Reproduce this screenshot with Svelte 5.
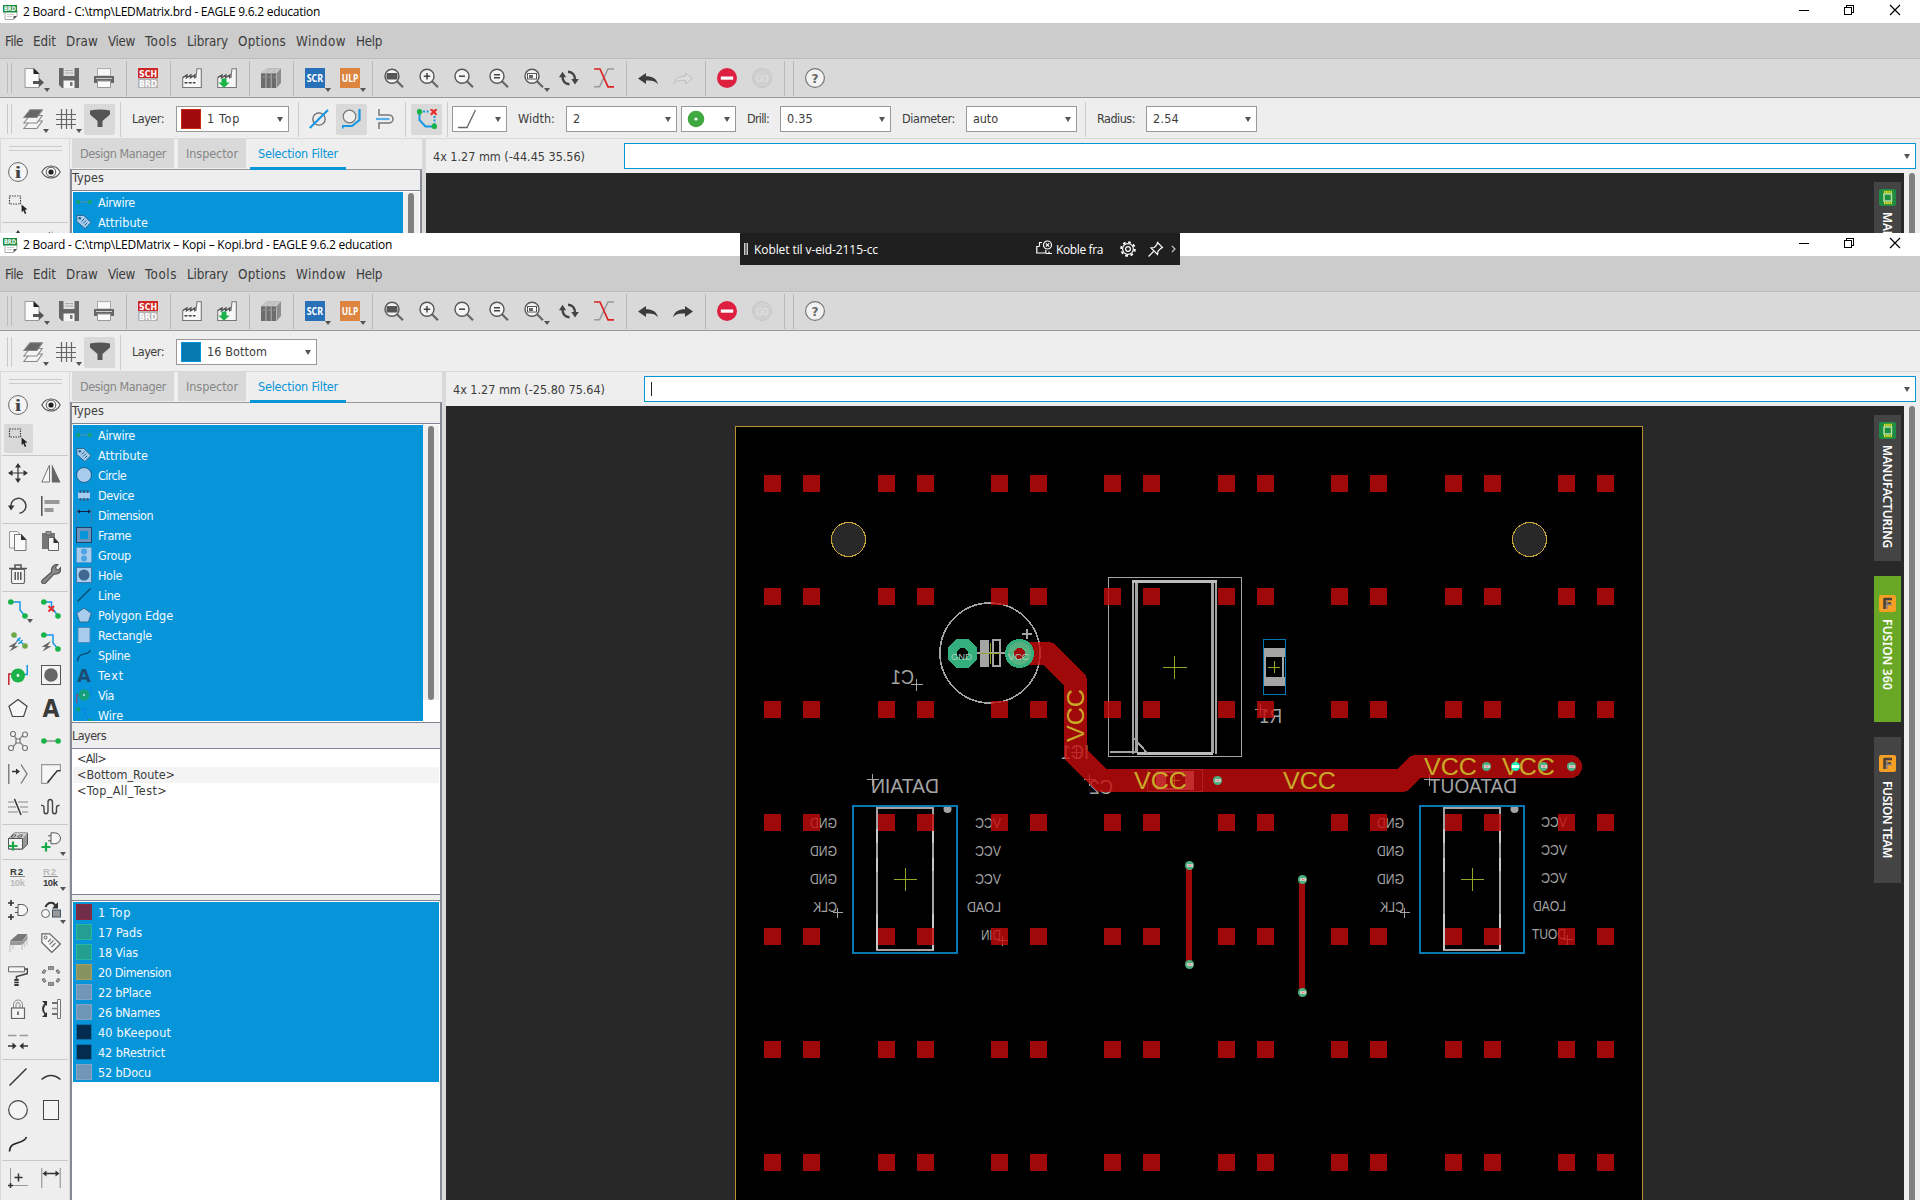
<script>
  // Letter-spaces a label so that it occupies exactly `w` pixels.
  function fit(node, w) {
    const n = node.textContent.length;
    node.style.letterSpacing = '0px';
    const natural = node.getBoundingClientRect().width;
    node.style.letterSpacing = (w - natural) / n + 'px';
    node.style.width = w + 'px';
  }
  function fitTall(node, h) {
    const n = node.textContent.length;
    const natural = node.getBoundingClientRect().height;
    node.style.letterSpacing = (h - natural) / n + 'px';
  }

  const menus = [['File', 18], ['Edit', 23], ['Draw', 32], ['View', 27], ['Tools', 32], ['Library', 41], ['Options', 48], ['Window', 50], ['Help', 26]];

  const lens = '<path d="M13 13.2l6 6" stroke="#666" stroke-width="2.2"/><circle cx="8" cy="8.2" r="7" fill="#f4f4f4" stroke="#555" stroke-width="1.4"/>';
  const factory = '<path d="M.7 19.500V9.500l4-2.500v2.500l4-2.500v2.500l4-2.500v2.500H14L15 .7h4.300v18.800z" fill="#f7f7f7" stroke="#777" stroke-width="1.1"/><path d="M1 9.500l4-2.500-.6 3L9 7l-.6 3L13 7l-.4 3.500" fill="none" stroke="#555" stroke-width="1.200"/>';
  const gate = (x, y) => `<path d="M${x} ${y}h3.500c4 0 6 3 6 5.500s-2 5.500-6 5.500h-3.500z" fill="#f6f6f6" stroke="#555"/><path d="M${x - 3} ${y + 3}h3M${x - 3} ${y + 8}h3M${x + 9.500} ${y + 5.500}h3" stroke="#555"/>`;
  const bolt = '<path d="M10 9L.5 14.800l4.200.2L1.500 19.500l9-5.300-4-.2z" fill="#666"/>';

  const icons = {
    new: '<path d="M1 .5h9l5 5V19.500H1z" fill="#fafafa" stroke="#999"/><path d="M9.500 0v6h6z" fill="#222"/><path d="M9 13h6v-3l5 4.500-5 4.500v-3H9z" fill="#555"/>',
    save: '<path d="M0 0h20v20H3l-3-3z" fill="#666"/><path d="M4.500 0h11v8h-11z" fill="#ddd"/><path d="M4.500 12.500h11V20h-11z" fill="#f6f6f6"/><path d="M11 14h2.500v4H11z" fill="#777"/><path d="M6 2.500h8M6 5h8" stroke="#aaa"/>',
    print: '<path d="M3.500.6h13V8h-13z" fill="#f8f8f8" stroke="#aaa"/><path d="M0 8h20v7H0z" fill="#666"/><path d="M2 10.500h16" stroke="#ccc"/><path d="M3.500 13h13v6.500h-13z" fill="#fafafa" stroke="#999"/>',
    sch: '<path d="M0 0h20v10H0z" fill="#cf2525"/><path d="M0 10h20v10H0z" fill="#b4b4b4"/><g font-family="DejaVu Sans Condensed, sans-serif" font-weight="700" font-size="9" fill="#fff"><text x="1" y="8.500" textLength="18" lengthAdjust="spacingAndGlyphs">SCH</text><text x="1" y="18.500" textLength="18" lengthAdjust="spacingAndGlyphs">BRD</text></g>',
    cam: factory + '<path d="M2.500 14.800h11" stroke="#444" stroke-width="1.600" stroke-dasharray="3 1.200"/>',
    cam2: factory + '<path d="M4.500 10.500h5v4h3.200L7 19.800 1.300 14.500h3.200z" fill="#19b347"/>',
    lib: '<path d="M0 5.500L5.500.5H20v14.500l-4.500 5H0z" fill="#8c8c8c"/><path d="M0 5.500L5.500.5H20L15.500 5.500z" fill="#c8c8c8"/><path d="M0 5.500h15.500V20H0z" fill="#6c6c6c"/><path d="M5 5.500V20M10.200 5.500V20M15.500 5.500V20M5 5.500L10 .5M10 5.500L15 .5" stroke="#b4b4b4"/><path d="M1.500 9h2.500M6.700 9h2.500M12 9h2.500" stroke="#999"/>',
    scr: '<path d="M0 0h20v20H0z" fill="#2870b8"/><text x="1.700" y="13.800" font-family="Noto Sans, sans-serif" font-weight="700" font-size="10" fill="#fff" textLength="16.500" lengthAdjust="spacingAndGlyphs">SCR</text>',
    ulp: '<path d="M0 0h20v20H0z" fill="#dc8440"/><text x="1.700" y="13.800" font-family="Noto Sans, sans-serif" font-weight="700" font-size="10" fill="#fff" textLength="16.500" lengthAdjust="spacingAndGlyphs">ULP</text>',
    zfit: lens + '<rect x="2.500" y="5" width="11" height="6.500" rx="1" fill="#555"/>',
    zin: lens + '<path d="M4.800 8.200h6.400M8 5v6.400" stroke="#444" stroke-width="1.500"/>',
    zout: lens + '<path d="M5 8.200h6" stroke="#444" stroke-width="1.500"/>',
    zeq: lens + '<path d="M5 6.700h6M5 9.700h6" stroke="#444" stroke-width="1.400"/>',
    zsel: lens + '<rect x="3.500" y="5.500" width="9" height="5.500" fill="#fff" stroke="#555"/><path d="M5 7h4v3H5z" fill="#666"/>',
    refresh: '<path d="M3.500 8.500C3.500 13 6 16.300 10.500 16.300M16 11.500C16 7 13.500 3.800 9 3.800" fill="none" stroke="#444" stroke-width="2.400"/><path d="M0 9.200L3.500 3.700 7.200 9.200zM12.300 11h7.500L16 16.500z" fill="#444"/>',
    ripup: '<path d="M0 18.800h5.500L14 1h6" fill="none" stroke="#999" stroke-width="1.600"/><path d="M0 1h6l8 17.800h6" fill="none" stroke="#d22" stroke-width="1.700"/>',
    undo: '<path d="M0 10.500L8 5v3.200c6 0 10.500 2 12 8-3-3.700-6.500-4-12-3.700V16z" fill="#3c3c3c"/>',
    redo: '<path d="M20 10.500L12 5v3.200c-6 0-10.500 2-12 8 3-3.700 6.500-4 12-3.700V16z" fill="#3c3c3c"/>',
    redoOff: '<path d="M19.500 10.500L12.500 5v3.200c-6 0-10.500 2-12 7.500 3-3.200 6.500-3.500 12-3.200V16z" fill="#ddd" stroke="#bebebe"/>',
    stop: '<circle cx="10" cy="10" r="10" fill="#dd2040"/><path d="M3.800 8.500h12.400v3.200H3.800z" fill="#fff"/>',
    go: '<circle cx="10" cy="10" r="9.500" fill="#d0d0d0" stroke="#c6c6c6"/><text x="4" y="13.700" font-family="Noto Sans, sans-serif" font-size="9.500" fill="#e6e6e6" textLength="12.500" lengthAdjust="spacingAndGlyphs">GO</text>',
    help: '<circle cx="10" cy="10" r="9.400" fill="#f2f2f2" stroke="#777" stroke-width="1.200"/><text x="6.400" y="15" font-family="DejaVu Sans, sans-serif" font-weight="700" font-size="13" fill="#666" textLength="7" lengthAdjust="spacingAndGlyphs">?</text>',
    layers: '<g stroke="#888" stroke-width="1.100"><path d="M.8 19.500l6-7.500h12.500l-5.500 7.500z" fill="#f4f4f4"/><path d="M.8 14l6-7.500h12.500l-5.500 7.500z" fill="#f4f4f4"/><path d="M.8 8.500L7 .8h12.500l-5.500 7.700z" fill="#666"/></g>',
    grid: '<path d="M5.500 0v20M10.500 0v20M15.500 0v20M0 5.500h20M0 10.500h20M0 15.500h20" stroke="#666" stroke-width="1.200"/>',
    filter: '<path d="M0 1.500Q10-.5 20 1.500v4L12.500 12v6h-5v-6L0 5.500z" fill="#555"/>',
    obs0: '<circle cx="10" cy="10" r="6.200" fill="none" stroke="#666" stroke-width="1.300"/><path d="M.8 19L19 1" stroke="#1898e4" stroke-width="2.200"/>',
    obs1: '<circle cx="7.500" cy="7.500" r="6.300" fill="#f0f0f0" stroke="#777" stroke-width="1.200"/><path d="M.5 19.500V17h9.500l7.500-6V0" fill="none" stroke="#1898e4" stroke-width="2.200"/>',
    obs2: '<path d="M4 0v6h9.500c2.500 0 4.500 1.800 4.500 4s-2 4-4.500 4H4v6" fill="none" stroke="#777" stroke-width="1.500"/><path d="M1 10h13.500" stroke="#58b0e8" stroke-width="2.200"/>',
    loop: '<path d="M2.500 3v8l6 6.500H15" fill="none" stroke="#1898e4" stroke-width="2"/><path d="M6 2.500h7M17.500 7v8" stroke="#1898e4" stroke-width="2" stroke-dasharray="2 1.500"/><circle cx="2.500" cy="2.800" r="2.800" fill="#19b347"/><circle cx="17.300" cy="17.300" r="2.800" fill="#19b347"/><path d="M13.800 0l5.800 5.800M19.600 0l-5.800 5.800" stroke="#e82c2c" stroke-width="2.200"/>',
    bend: '<path d="M1 18.500h9L18.500 1" fill="none" stroke="#666" stroke-width="1.300"/>',
    via: '<circle cx="10" cy="10" r="8.300" fill="#40a840"/><circle cx="10" cy="10" r="1.600" fill="#fff"/>',
    info: '<circle cx="10" cy="10" r="9.400" fill="#f4f4f4" stroke="#666"/><text x="6.800" y="15.500" font-family="Liberation Serif, serif" font-weight="700" font-size="16" fill="#444" textLength="6.500" lengthAdjust="spacingAndGlyphs">i</text>',
    eye: '<path d="M.8 10C5 2 15 2 19.200 10 15 18 5 18 .8 10z" fill="#f6f6f6" stroke="#555" stroke-width="1.100"/><circle cx="10" cy="10" r="4.800" fill="none" stroke="#555"/><circle cx="10" cy="10" r="2.600" fill="#222"/>',
    select: '<rect x="1.500" y="1" width="11" height="8" fill="none" stroke="#444" stroke-width="1.200" stroke-dasharray="1.500 1"/><path d="M13.500 9.500l6 5-2.700.2 1.500 3.500-1.500.7-1.400-3.400-1.700 1.800z" fill="#222"/>',
    move: '<path d="M10 2v16M2 10h16" stroke="#333" stroke-width="1.200"/><path d="M10 0l3 4.500H7zM10 20l-3-4.500h6zM0 10l4.500-3v6zM20 10l-4.500 3V7z" fill="#333"/>',
    mirror: '<path d="M.8 19L8.500 2v17z" fill="#f6f6f6" stroke="#777"/><path d="M10.800 1L19.500 19.500h-8.700z" fill="#666"/>',
    rotate: '<path d="M3 11A7.500 7.500 0 1 1 11.500 17.300" fill="none" stroke="#444" stroke-width="1.500"/><path d="M0 9.500h6.500L3 14.500z" fill="#333"/>',
    align: '<path d="M.8 0v20" stroke="#444" stroke-width="1.400"/><path d="M3.500 4h15v4h-15zM3.500 12h9v4h-9z" fill="#999"/>',
    copy: '<path d="M1.500.5h8l4 4.500v12h-12z" fill="#f8f8f8" stroke="#999"/><path d="M6.500 3.500h7l4.500 5v11H6.500z" fill="#fafafa" stroke="#777"/><path d="M13 3v6h5.500z" fill="#333"/>',
    paste: '<path d="M1 2h13v16H1z" fill="#777"/><path d="M5 .3h5V4H5z" fill="#999" stroke="#555" stroke-width=".8"/><path d="M7.500 6.500h5.500l4.500 5v8h-10z" fill="#f6f6f6" stroke="#666"/><path d="M12.500 6v6H18z" fill="#333"/>',
    trash: '<path d="M3.500 5.500h13v12.200q0 1.800-1.800 1.800H5.300q-1.800 0-1.800-1.800z" fill="#f4f4f4" stroke="#666" stroke-width="1.200"/><path d="M1 4.500h18M7 4V1h6v3M7.200 8v8M10 8v8M12.800 8v8" fill="none" stroke="#555" stroke-width="1.500"/>',
    wrench: '<path d="M1 16.500L10.500 8q-.7-5 3.500-7.200 1.500-.7 3-.5l-2.600 3 1 2.200 2.400.2 2-2.400q.6 4.500-2.800 6.300-1.800 1-4 .4L4 19.500q-1.500.8-2.700-.4T1 16.500z" fill="#888" stroke="#555" stroke-width="1.100"/>',
    route: '<path d="M3 3h9v8l5 6" fill="none" stroke="#1898e4" stroke-width="1.500"/><circle cx="2.800" cy="3" r="2.800" fill="#19b347"/><circle cx="17" cy="17" r="2.800" fill="#19b347"/>',
    rip: '<path d="M3 3h7.500v5l6.500 9" fill="none" stroke="#1898e4" stroke-width="1.500"/><circle cx="2.800" cy="3" r="2.800" fill="#19b347"/><circle cx="17" cy="17" r="2.800" fill="#19b347"/><path d="M7.500 7l5.500 5.500M13 7l-5.500 5.500" stroke="#e82c2c" stroke-width="2"/>',
    fan: '<path d="M6 3l11 11" stroke="#1898e4" stroke-width="1.500" stroke-dasharray="3 2"/><path d="M8.500 9.500l4-4M10.500 12l4-4" stroke="#1898e4" stroke-width="1.400"/><circle cx="6" cy="3" r="2.800" fill="#70a848"/><circle cx="17" cy="14" r="2.800" fill="#70a848"/>' + bolt,
    auto: '<path d="M3 3h9v8l5 6" fill="none" stroke="#1898e4" stroke-width="1.500"/><circle cx="2.800" cy="3" r="2.800" fill="#19b347"/><circle cx="17" cy="17" r="2.800" fill="#19b347"/>' + bolt,
    viaTool: '<path d="M.8 20V9H5" fill="none" stroke="#c03038" stroke-width="1.600"/><path d="M19.300 0v9.500H15" fill="none" stroke="#1898e4" stroke-width="1.600"/><circle cx="10" cy="10.500" r="7" fill="#19b347"/><circle cx="10" cy="10.500" r="1.400" fill="#fff"/>',
    hole: '<rect x=".5" y=".5" width="19" height="19" fill="#f4f4f4" stroke="#555"/><circle cx="10" cy="10" r="6.800" fill="#666"/>',
    poly: '<path d="M10 1.500l9 6.800-3.400 10.200H4.400L1 8.300z" fill="#f6f6f6" stroke="#444" stroke-width="1.200"/>',
    text: '<text x="1.500" y="18.800" font-family="DejaVu Sans, sans-serif" font-weight="700" font-size="24.500" fill="#3a3a3a" textLength="17" lengthAdjust="spacingAndGlyphs">A</text>',
    rats: '<path d="M5 3l5 7-6 7M16 3l-6 7 7 6" fill="none" stroke="#888" stroke-width="1.300"/><g fill="#f6f6f6" stroke="#777" stroke-width="1.200"><circle cx="5" cy="3" r="2.500"/><circle cx="17" cy="3.500" r="2.500"/><circle cx="3" cy="17" r="2.500"/><circle cx="17" cy="17" r="2.500"/><path d="M8 8h4v4H8z"/></g>',
    air: '<path d="M3 10h14" stroke="#888" stroke-width="1.400"/><circle cx="2.900" cy="10" r="2.800" fill="#19b347"/><circle cx="17.100" cy="10" r="2.800" fill="#19b347"/>',
    split: '<path d="M.8 0v20" stroke="#666" stroke-width="1.200"/><path d="M13 .5l6 9.500-6 9.500" fill="none" stroke="#777" stroke-width="1.300"/><path d="M4 7.500h5" stroke="#333" stroke-width="1.500"/><path d="M8 4.500l4 3-4 3z" fill="#333"/>',
    miter: '<path d="M.6.6h18.800v6.200H16L6.500 19.400H.6z" fill="#f6f6f6" stroke="#999" stroke-width="1.200"/><path d="M19.400 6.600h-3L6.500 18.500" fill="none" stroke="#333" stroke-width="1.400"/>',
    slice: '<path d="M0 5h6M10 5h10M0 10h8M12 10h8M0 15h10M14 15h6" stroke="#aaa" stroke-width="1.400"/><path d="M6.500 2L13 18" stroke="#333" stroke-width="1.500"/>',
    meander: '<path d="M0 8.500q3-.7 3 2.500v3q0 2.800 2 2.800t2-2.800V5.500q0-3 2.200-3t2.300 3V14q0 2.800 2 2.800t2-2.800v-3q0-3 3-2.500" fill="none" stroke="#444" stroke-width="1.400"/>',
    add: '<path d="M.5 6.500L6 1h13.500v11.500L14.500 17H.5z" fill="#999" stroke="#555"/><path d="M.5 6.500L6 1h13.500l-5 5.500z" fill="#ccc"/><path d="M.5 6.500h14V17H.5z" fill="#f4f4f4" stroke="#555"/><path d="M3 5l2-2h3L6.500 5zM9.500 5l2-2h3L13 5z" fill="#fff" stroke="#555"/><path d="M5 9.500v9M.5 14h9" stroke="#19a847" stroke-width="2.200"/>',
    gatePlus: gate(10, 0.8) + '<path d="M5 10.500v9M.5 15h9" stroke="#19a847" stroke-width="2.200"/>',
    r2a: '<g font-family="Liberation Sans, sans-serif" font-weight="700" font-size="9.500"><text x="2" y="8" fill="#3a3a3a" textLength="13">R2</text><text x="2" y="18.500" fill="#bbb" textLength="15">10k</text></g><path d="M2 9.500h15" stroke="#888"/>',
    r2b: '<g font-family="Liberation Sans, sans-serif" font-weight="700" font-size="9.500"><text x="2" y="8" fill="#bbb" textLength="13">R2</text><text x="2" y="18.500" fill="#3a3a3a" textLength="15">10k</text></g><path d="M2 9.500h15" stroke="#888"/>',
    gates: gate(10, 4.5) + '<path d="M3 0v6M0 3h6M3 14v6M0 17h6" stroke="#333" stroke-width="1.600"/>',
    replace: '<path d="M4.500 7Q7 1.500 12 3l3 3" fill="none" stroke="#333" stroke-width="2"/><path d="M17 2v6.500h-6z" fill="#333"/><circle cx="4.500" cy="13.500" r="4" fill="#f6f6f6" stroke="#666"/><rect x="11.500" y="10" width="8" height="7" fill="#999" stroke="#456"/>',
    smash: '<path d="M3 7L10 1h9.500L14 8.500H2z" fill="#777"/><path d="M2 8.500h12L19.500 2v4L14.500 12H2z" fill="#999"/><path d="M2 12v7M5 12v4M14 11v6M16.500 9v5M19 7v5" stroke="#ccc" stroke-width="1.400"/>',
    tag: '<path d="M.8.8h8L19.300 11l-8.500 8.500L.8 9.500z" fill="#f8f8f8" stroke="#666" stroke-width="1.200"/><circle cx="4.500" cy="4.500" r="1.500" fill="none" stroke="#555"/><path d="M7 9l3-3M8.500 11.500l4-4M10.500 14l4-4" stroke="#777" stroke-width="1.200"/>',
    paint: '<path d="M.5.8h16v5H.5z" fill="#f6f6f6" stroke="#666"/><path d="M17 3h2.500v4.500L8.500 10.500v2.500" fill="none" stroke="#444" stroke-width="1.600"/><path d="M6.300 13h4.400v7H6.300z" fill="#333"/><path d="M6 15.300h5M6 17.600h5" stroke="#eee" stroke-width=".8"/>',
    ring: '<g fill="#999" stroke="#666" stroke-width=".8"><path d="M7.500.6h5v3h-5zM7.500 16.400h5v3h-5zM1 6.500l2-3 2 1.300-2 3zM15 4.800l2-1.300 2 3-2 1.300zM1 13.500l2-1.300 2 3-2 1.300zM15 15.200l2-3 2 1.300-2 3z"/></g>',
    lock: '<path d="M5.500 9V5.500a4.500 4.500 0 0 1 9 0V9M8 9V5.700a2 2 0 0 1 4 0V9" fill="none" stroke="#888"/><rect x="3.500" y="9" width="13" height="10.500" fill="#f4f4f4" stroke="#666" stroke-width="1.200"/><path d="M10 12.500v3.500" stroke="#444" stroke-width="1.400"/>',
    pinswap: '<path d="M5 4Q-1 10 5 16" fill="none" stroke="#333" stroke-width="1.800"/><path d="M1 2h5v5zM1 18h5v-5z" fill="#333"/><path d="M16.500.5h3v19h-3z" fill="#f4f4f4" stroke="#777"/><path d="M11 4h5M11 15h5" stroke="#444" stroke-width="1.500"/><path d="M11 9.500h5" stroke="#888" stroke-width="1.500"/>',
    optimize: '<path d="M0 3.500h8.500M11.500 3.500H20" stroke="#999" stroke-width="1.500"/><path d="M0 14h5M15 14h5" stroke="#333" stroke-width="1.400"/><path d="M4.500 10.500l4 3.500-4 3.500zM15.500 10.500l-4 3.500 4 3.500z" fill="#333"/>',
    line: '<path d="M1.500 18.500l17-17" stroke="#333" stroke-width="1.400"/>',
    arc: '<path d="M.5 12.500q9.500-8 19 0" fill="none" stroke="#333" stroke-width="1.400"/>',
    circle: '<circle cx="10" cy="10" r="9.300" fill="#f4f4f4" stroke="#444" stroke-width="1.200"/>',
    rect: '<rect x="2.500" y=".5" width="15" height="19" fill="#f4f4f4" stroke="#444"/>',
    spline: '<path d="M1.500 18.500C2 7 15 12.500 18.500 4" fill="none" stroke="#222" stroke-width="1.600"/>',
    mark: '<path d="M2.500 0v20M0 17.500h20" stroke="#999"/><path d="M10.500 5.500v8M6.500 9.500h8M2.500 15v5M0 17.500h5" stroke="#333" stroke-width="1.500"/>',
    dim: '<path d="M.8 0v20M19.200 0v20" stroke="#888"/><path d="M4 5.500h12" stroke="#333" stroke-width="1.500"/><path d="M1.500 5.500l4-3v6zM18.500 5.500l-4-3v6z" fill="#333"/>'
  };

  const mini = {
    Airwire: '<path d="M3 8h10" stroke="#5a8fb0"/><circle cx="2.200" cy="8" r="2.200" fill="#14a078"/><circle cx="13.800" cy="8" r="2.200" fill="#14a078"/>',
    Attribute: '<path d="M.8 1.500h7L15 8.500 9 14.500.8 7.500z" fill="#a8ccec" stroke="#2c6894"/><circle cx="3.800" cy="4.300" r="1.300" fill="#1c5c8c"/><path d="M5.500 7.500l3-3M7 9.500l3-3M8.700 11.300l2.500-2.500" stroke="#1c5c8c" stroke-width="1"/>',
    Circle: '<circle cx="8" cy="8" r="7.500" fill="#a8ccec" stroke="#1c5c8c"/>',
    Device: '<path d="M2 5.500h12v6H2z" fill="#a8ccec"/><path d="M4.500 3v3M8 3v3M11.500 3v3M4.500 11v3M8 11v3M11.500 11v3" stroke="#335f88" stroke-width="1.800"/>',
    Dimension: '<path d="M.5 0v16M15.500 0v16" stroke="#3c7cac"/><path d="M3 4.500h10" stroke="#124"/><path d="M1 4.500l3-2v4zM15 4.500l-3-2v4z" fill="#124"/>',
    Frame: '<rect x=".5" y=".5" width="15" height="15" fill="#6c94bc" stroke="#1c4468"/><path d="M4 4h8v8H4z" fill="#0795d9"/>',
    Group: '<rect x=".5" y=".5" width="15" height="15" fill="#a8ccec" stroke="#5c90c0" stroke-dasharray="2 1"/><circle cx="8" cy="4.500" r="3" fill="#4ca4e4"/><circle cx="8" cy="11.500" r="3" fill="#4ca4e4"/>',
    Hole: '<rect x=".5" y=".5" width="15" height="15" fill="#a8ccec" stroke="#4478a4"/><circle cx="8" cy="8" r="5.500" fill="#406890"/>',
    Line: '<path d="M1.500 14.500l13-13" stroke="#084468" stroke-width="1.200"/>',
    'Polygon Edge': '<path d="M8 1l7.300 5.300-2.800 8.700h-9L.7 6.300z" fill="#a8ccec" stroke="#2c6894"/>',
    Rectangle: '<rect x="2" y=".5" width="12" height="15" fill="#a8ccec" stroke="#4c8cbc"/>',
    Spline: '<path d="M1.500 14.500C2 4 12 9.500 14.500 3" fill="none" stroke="#084468" stroke-width="1.200"/>',
    Text: '<text x="1.200" y="14.500" font-family="DejaVu Sans, sans-serif" font-weight="700" font-size="18.500" fill="#1c4c74" textLength="13.500" lengthAdjust="spacingAndGlyphs">A</text>',
    Via: '<path d="M.8 16V8H4" fill="none" stroke="#7c5478" stroke-width="1.400"/><path d="M15.200 0v7H13" fill="none" stroke="#0884e8" stroke-width="1.400"/><circle cx="8" cy="8" r="5.500" fill="#14a078"/><circle cx="8" cy="8" r="1.200" fill="#a8ccec"/>',
    Wire: '<path d="M2 2h7.500v6l4 6" fill="none" stroke="#0884e8" stroke-width="1.400"/><circle cx="2.200" cy="2.200" r="2.200" fill="#14a078"/><circle cx="13.800" cy="13.800" r="2.200" fill="#14a078"/>'
  };
  const types = [['Airwire', 37], ['Attribute', 50], ['Circle', 28], ['Device', 36], ['Dimension', 55], ['Frame', 33], ['Group', 33], ['Hole', 24], ['Line', 22], ['Polygon Edge', 75], ['Rectangle', 54], ['Spline', 32], ['Text', 26], ['Via', 16], ['Wire', 25]];

  const bar = [['new', 1], ['save'], ['print'], '|', ['sch'], '|', ['cam'], ['cam2'], '|', ['lib'], '|', ['scr', 1], ['ulp', 1], '|', ['zfit'], ['zin'], ['zout'], ['zeq'], ['zsel', 1], ['refresh'], ['ripup'], '|', ['undo'], ['redo'], '|', ['stop'], ['go'], '||', ['help']];

  const side = [
    [['info'], ['eye']], [['select'], null], '-',
    [['move'], ['mirror']], [['rotate'], ['align']], '-',
    [['copy'], ['paste']], [['trash'], ['wrench']], '-',
    [['route', 1], ['rip']], [['fan'], ['auto']], [['viaTool'], ['hole']], [['poly'], ['text']], [['rats'], ['air']], [['split'], ['miter']], [['slice'], ['meander']], '-',
    [['add'], ['gatePlus', 1]], '-',
    [['r2a'], ['r2b', 1]], [['gates'], ['replace', 1]], [['smash'], ['tag']], [['paint'], ['ring']], [['lock'], ['pinswap']], [['optimize'], null], '-',
    [['line'], ['arc']], [['circle'], ['rect']], [['spline'], null], '-',
    [['mark'], ['dim']]
  ];

  const layers = [
    ['1 Top', 'top', 33], ['17 Pads', 'pads', 44], ['18 Vias', 'pads', 40], ['20 Dimension', 'dimn', 73], ['22 bPlace', 'place', 53],
    ['26 bNames', 'place', 62], ['40 bKeepout', 'keep', 73], ['42 bRestrict', 'keep', 67], ['52 bDocu', 'place', 53]
  ];

  // `full` is false for the window that is mostly covered: only its visible top part is built.
  const wins = [
    { id: 'a', full: false, title: '2 Board - C:\\tmp\\LEDMatrix.brd - EAGLE 9.6.2 education', tw: 297, coords: '4x 1.27 mm (-44.45 35.56)', layer: '1 Top', lw: 33 },
    { id: 'b', full: true, title: '2 Board - C:\\tmp\\LEDMatrix – Kopi – Kopi.brd - EAGLE 9.6.2 education', tw: 369, coords: '4x 1.27 mm (-25.80 75.64)', layer: '16 Bottom', lw: 60 }
  ];

  const padX = [764, 803, 878, 917, 991, 1030, 1104, 1143, 1218, 1257, 1331, 1370, 1445, 1484, 1558, 1597];
  const padY = [475, 588, 701, 814, 928, 1041, 1154];
  // Mirrored silkscreen labels: text, left, baseline, width, font size.
  const silk = [
    ['C1', 891, 684, 23, 20], ['R1', 1260, 723, 22, 20], ['IC1', 1061, 759, 28, 20], ['C2', 1089, 794, 24, 20],
    ['DATAIN', 871, 793, 68, 20], ['DATAOUT', 1429, 793, 88, 20],
    ['GND', 810, 828, 27, 14.5], ['GND', 810, 856, 27, 14.5], ['GND', 810, 884, 27, 14.5], ['CLK', 813, 912, 24, 14.5],
    ['VCC', 975, 828, 26, 14.5], ['VCC', 975, 856, 26, 14.5], ['VCC', 975, 884, 26, 14.5], ['LOAD', 967, 912, 34, 14.5], ['DIN', 981, 940, 20, 14.5],
    ['GND', 1377, 828, 27, 14.5], ['GND', 1377, 856, 27, 14.5], ['GND', 1377, 884, 27, 14.5], ['CLK', 1380, 912, 24, 14.5],
    ['VCC', 1541, 827, 26, 14.5], ['VCC', 1541, 855, 26, 14.5], ['VCC', 1541, 883, 26, 14.5], ['LOAD', 1533, 911, 33, 14.5], ['DOUT', 1532, 939, 34, 14.5]
  ];
  const crosses = [[916.5, 684.5, 6], [1260.5, 709.5, 6], [1076.5, 752.5, 6], [1089.5, 779.5, 6], [872.5, 779.5, 6], [1429.5, 779.5, 6], [837.5, 912.5, 5], [1002.5, 940.5, 5], [1404.5, 912.5, 5], [1567.5, 939.5, 5]];
  const vias = [[1217.5, 780.5], [1486.5, 766.5], [1543.5, 766.5], [1571.5, 766.5], [1189.5, 865.5], [1189.5, 964.5], [1302.5, 879.5], [1302.5, 992.5]];
  const nets = [[1134, 789], [1283, 789], [1424, 775], [1502, 775]];
</script>

{#snippet icon(name)}
  <svg class="ico" viewBox="0 0 20 20">{@html icons[name]}</svg>
{/snippet}

{#snippet tool(t)}
  <span class="tool">
    {@render icon(t[0])}
    {#if t[1]}<i class="dd"></i>{/if}
  </span>
{/snippet}

{#snippet fusion()}
  <svg class="tabico" viewBox="0 0 17 17"><rect width="17" height="17" rx="2" fill="#f4a024" /><path d="M5.500 3v11M5 4h8M6 8.500h6" fill="none" stroke="#4a4038" stroke-width="2.500" /><path d="M8 5v9M8 9.500h5" stroke="#8a8480" stroke-width="1.500" /></svg>
{/snippet}

{#snippet connector(dx)}
  <g transform="translate({dx} 0)" fill="none">
    <path d="M877 807v144M933 807v144M876 808h58M876 950h58" stroke="#a4a4a4" stroke-width="2" />
    <path d="M877 829v14M877 858v14M877 914v36M933 829v14M933 858v13M933 914v36" stroke="#c8c8c8" stroke-width="2" />
    <circle cx="947.500" cy="809" r="4" fill="#a4a4a4" shape-rendering="auto" />
    <rect x="853" y="806" width="104" height="147" stroke="#0878b2" stroke-width="2" />
    <path d="M894 879.500h23M905.500 868v23" stroke="#8fa82a" />
  </g>
{/snippet}

{#snippet board()}
  <svg class="board" viewBox="446 406 1458 794" shape-rendering="crispEdges">
    <rect x="735.500" y="426.500" width="907" height="900" fill="#000" stroke="#b8922f" />
    {#each [848.5, 1529.5] as x}<circle cx={x} cy="539.500" r="17" fill="#282828" stroke="#c8a53c" />{/each}

    <g fill="none" stroke="#a4a4a4">
      <circle cx="990" cy="653" r="50" stroke-width="1.600" />
      <path d="M1022 634h10M1027 629v10M970 653h38" stroke-width="1.800" />
      <rect x="980" y="640" width="9" height="27" fill="#a4a4a4" stroke="none" />
      <rect x="993" y="640" width="7" height="25.500" stroke-width="2" />
      <rect x="1108.500" y="577.500" width="133" height="179" />
      <path d="M1133 580v174M1216 580v174" stroke-width="2" />
      <path d="M1136.500 582v171M1212.500 582v171" stroke-width="3" />
      <path d="M1132 581.500h85" stroke-width="3" stroke="#bcbcbc" />
      <path d="M1137 753.500h76" stroke-width="3" stroke="#bcbcbc" />
      <path d="M1110 752h25M1134 738l13 15" stroke-width="2" />
      <path d="M1264 648h21v9h-21zM1264 677h21v9h-21z" fill="#a4a4a4" stroke="none" />
      <path d="M1265 657v20M1283 657v20" stroke-width="2" />
      <rect x="1263.500" y="639.500" width="22" height="55" stroke="#0878b2" />
      {#each crosses as [x, y, r]}<path d="M{x - r} {y}h{2 * r}M{x} {y - r}v{2 * r}" />{/each}
    </g>
    <path d="M1163 667.500h24M1174.500 656v23M1268 667.500h12M1274.500 661v12M980 653.500h20M990.500 643v21" stroke="#8fa82a" />

    {@render connector(0)}
    {@render connector(567)}

    <g class="silk" shape-rendering="auto">
      {#each silk as [t, x, y, w, s]}
        <text transform="translate({x + w} {y}) scale(-1 1)" font-size={s} textLength={w} lengthAdjust="spacingAndGlyphs">{t}</text>
      {/each}
    </g>

    <g opacity=".8" fill="#c80c0c" stroke="#c80c0c">
      {#each padY as y}{#each padX as x}<rect {x} {y} width="17" height="17" stroke="none" />{/each}{/each}
      <path d="M1019.500 653.500H1048L1075.500 681V754L1102 780.500H1402L1416 766.500H1570.500" fill="none" stroke-width="23" stroke-linejoin="round" stroke-linecap="round" />
      <path d="M1189 865v100M1302 880v113" fill="none" stroke-width="6" />
    </g>

    <g fill="#c22c2c">
      <path d="M1156 771h10v19h-10zM1185 771h9v19h-9zM1166 771h19v2h-19zM1166 788h19v2h-19z" />
      <rect x="1147.500" y="769.500" width="55" height="22" fill="none" stroke="#b02020" />
      <path d="M1170 780.500h10M1174.500 776v10" stroke="#c05018" />
    </g>

    <path d="M956.500 639h12l8.500 8.500v12l-8.500 8.500h-12l-8.500-8.500v-12z" fill="#33ae7c" />
    <circle cx="962.500" cy="653.500" r="5.500" fill="#000" />
    <circle cx="1019.500" cy="653.500" r="14.500" fill="#33ae7c" />
    <circle cx="1019.500" cy="653.500" r="11.500" fill="#57b080" />
    <circle cx="1019.500" cy="653.500" r="5.500" fill="#a00a0a" />
    <g class="padname" shape-rendering="auto">
      <text x="951" y="660" textLength="21" lengthAdjust="spacingAndGlyphs">GND</text>
      <text x="1008" y="660" textLength="21" lengthAdjust="spacingAndGlyphs">VCC</text>
    </g>

    <g class="net" shape-rendering="auto">
      {#each nets as [x, y]}<text {x} {y} textLength="53" lengthAdjust="spacingAndGlyphs">VCC</text>{/each}
      <text transform="translate(1084 742) rotate(-90)" textLength="53" lengthAdjust="spacingAndGlyphs">VCC</text>
    </g>

    {#each vias as [x, y]}
      <circle cx={x} cy={y} r="4.500" fill="#4cb080" shape-rendering="auto" />
      <path d="M{x - 3} {y}h6" stroke="#d0c8c0" stroke-width="3" />
      <path d="M{x - 1} {y}h2" stroke="#e88080" />
    {/each}
    <circle cx="1515.500" cy="766.500" r="4.500" fill="#18f4bc" shape-rendering="auto" />
    <path d="M1512 766.500h7" stroke="#e8fcf4" stroke-width="3" />
  </svg>
{/snippet}

{#snippet combo(text, w)}
  <span class="combo std">
    <span class="t" use:fit={w}>{text}</span>
    <i class="ar"></i>
  </span>
{/snippet}

{#snippet win(w)}
  <section class="win {w.id}">
    <header class="title">
      <svg class="app" viewBox="0 0 15 16"><path d="M2 6h12v6l-3.500 3.500H2z" fill="#fff" stroke="#999" stroke-width=".8" /><path d="M14 12h-3.500v3.500z" fill="#555" /><path d="M0 1h14v7.500H0z" fill="#1a8c40" /><text x="1" y="7.300" font-family="DejaVu Sans Condensed, sans-serif" font-weight="700" font-size="6.500" fill="#fff" textLength="12" lengthAdjust="spacingAndGlyphs">BRD</text><path d="M4 10.500h7M4 12.500h5" stroke="#bbb" stroke-width=".8" /></svg>
      <span class="t cap" use:fit={w.tw}>{w.title}</span>
      <svg class="ctl" viewBox="0 0 102 12" fill="none" stroke="#000"><path d="M0 6.500h10" shape-rendering="crispEdges" /><path d="M45.500 3.500h7v7h-7zM47.500 3.500v-2h7v7h-2" shape-rendering="crispEdges" /><path d="M91 1l10 10M101 1L91 11" stroke-width="1.200" /></svg>
    </header>
    <nav class="menu">
      {#each menus as [m, mw]}<span class="t" use:fit={mw}>{m}</span>{/each}
    </nav>
    <div class="bar">
      <i class="grip"></i>
      {#each bar as b}
        {#if b === '|'}<i class="sep"></i>
        {:else if b === '||'}<i class="sep first"></i><i class="sep second"></i>
        {:else if b[0] === 'redo' && !w.full}{@render tool(['redoOff'])}
        {:else}{@render tool(b)}{/if}
      {/each}
    </div>
    <div class="opts">
      <i class="grip"></i>
      {@render tool(['layers', 1])}
      {@render tool(['grid', 1])}
      <span class="on filt">{@render icon('filter')}</span>
      <i class="sp s1"></i>
      <span class="t lab" use:fit={32}>Layer:</span>
      <span class="combo layer">
        <b class="sw"></b>
        <span class="t" use:fit={w.lw}>{w.layer}</span>
        <i class="ar"></i>
      </span>
      {#if !w.full}
        <i class="sp s2"></i>
        <span class="ob">{@render icon('obs0')}</span>
        <span class="on">{@render icon('obs1')}</span>
        <span class="ob2">{@render icon('obs2')}</span>
        <i class="sp s3"></i>
        <span class="on">{@render icon('loop')}</span>
        <i class="sp s4"></i>
        <span class="combo small">{@render icon('bend')}<i class="ar"></i></span>
        <span class="t lab g11" use:fit={37}>Width:</span>
        {@render combo('2', 8)}
        <span class="combo small viac">{@render icon('via')}<i class="ar"></i></span>
        <span class="t lab g11" use:fit={22}>Drill:</span>
        {@render combo('0.35', 26)}
        <span class="t lab g11" use:fit={53}>Diameter:</span>
        {@render combo('auto', 25)}
        <i class="sp s5"></i>
        <span class="t lab g11" use:fit={38}>Radius:</span>
        {@render combo('2.54', 26)}
      {/if}
    </div>
    <div class="main">
      <aside class="tools">
        <i class="hgrip"></i>
        {#each w.full ? side : side.slice(0, 4) as r}
          {#if r === '-'}<i class="hs"></i>
          {:else}
            <div class="trow">
              {#each r as t}
                {#if t}<span class={{ cell: true, active: t[0] === 'select' && w.full }}>{@render tool(t)}</span>{/if}
              {/each}
            </div>
          {/if}
        {/each}
      </aside>
      <div class="panel">
        <div class="tabs">
          <span class="tab dm"><span class="t" use:fit={86}>Design Manager</span></span>
          <span class="tab in"><span class="t" use:fit={52}>Inspector</span></span>
          <span class="tab sf"><span class="t" use:fit={80}>Selection Filter</span></span>
        </div>
        <div class="frame">
          <div class="hd"><span class="t" use:fit={32}>Types</span></div>
          <div class="list types">
            <div class="rows">
              {#each w.full ? types : types.slice(0, 2) as [n, nw]}
                <div class="row"><svg class="mi" viewBox="0 0 16 16">{@html mini[n]}</svg><span class="t" use:fit={nw}>{n}</span></div>
              {/each}
            </div>
            <div class="track"><i></i></div>
          </div>
          {#if w.full}
            <div class="hd h2"><span class="t" use:fit={34}>Layers</span></div>
            <div class="list sets">
              <div><span class="t" use:fit={29}>&lt;All&gt;</span></div>
              <div class="alt"><span class="t" use:fit={98}>&lt;Bottom_Route&gt;</span></div>
              <div><span class="t" use:fit={90}>&lt;Top_All_Test&gt;</span></div>
            </div>
            <div class="list lay">
              {#each layers as [n, c, nw]}
                <div class="row"><b class="chip {c}"></b><span class="t" use:fit={nw}>{n}</span></div>
              {/each}
            </div>
          {/if}
        </div>
      </div>
      <i class="split"></i>
      <div class="work">
        <div class="cmd">
          <span class="t" use:fit={152}>{w.coords}</span>
          <span class="input">{#if w.full}<i class="caret"></i>{/if}<i class="ar"></i></span>
        </div>
        <div class="view">
          <div class="canvas">
            {#if w.full}{@render board()}{/if}
            <div class="sidetabs">
              <div class="st s-m">
                <svg class="tabico" viewBox="0 0 17 17"><rect width="17" height="17" rx="2" fill="#1d8c42" /><path d="M5 3h8M5 14h8" stroke="#f0e020" stroke-width="2.500" stroke-dasharray="1.500 .7" /><rect x="5" y="5" width="7.500" height="7" fill="#1d8c42" stroke="#b8e0a0" stroke-width="1.500" /></svg>
                <span use:fitTall={103}>MANUFACTURING</span>
              </div>
              {#if w.full}
                <div class="st s-f">{@render fusion()}<span use:fitTall={71}>FUSION 360</span></div>
                <div class="st s-t">{@render fusion()}<span use:fitTall={77}>FUSION TEAM</span></div>
              {/if}
            </div>
          </div>
          <div class="vtrack"><i></i></div>
        </div>
      </div>
    </div>
  </section>
{/snippet}

<div class="desk">
  {@render win(wins[0])}
  {@render win(wins[1])}
  <div class="remote">
    <i class="rg"></i>
    <span class="t" use:fit={124}>Koblet til v-eid-2115-cc</span>
    <svg class="r1" viewBox="0 0 17 16" fill="none" stroke="#fff" stroke-width="1.200"><path d="M6 2.500H3.500v4M3 6.500H.8v6.500h9V10M13 11.500v2h-2M10 13.500h6" /><circle cx="11.500" cy="5" r="4" /><path d="M9.800 3.300l3.400 3.400M13.200 3.300L9.800 6.700" /></svg>
    <span class="t" use:fit={47}>Koble fra</span>
    <svg class="r2" viewBox="0 0 16 16" fill="none" stroke="#fff"><circle cx="8" cy="8" r="2.400" stroke-width="1.200" /><circle cx="8" cy="8" r="5.400" stroke-width="1.200" /><circle cx="8" cy="8" r="6.900" stroke-width="1.800" stroke-dasharray="2.700 2.720" /></svg>
    <svg class="r3" viewBox="0 0 16 16" fill="none" stroke="#fff" stroke-width="1.200"><path d="M9.500 1.500l5 5-1.500.8-3 2.700-.5 3.500-6.500-6.500 3.500-.5 2.500-3zM5.500 10.500l-5 5" /></svg>
    <svg class="r4" viewBox="0 0 5 8" fill="none" stroke="#ccc" stroke-width="1.200"><path d="M.8.8L4 4 .8 7.200" /></svg>
  </div>
</div>

<style>
  :global(body) { margin: 0; overflow: hidden; }
  .desk { position: relative; width: 1920px; height: 1200px; overflow: hidden; font: 12.5px/16px "DejaVu Sans Condensed", "Noto Sans", sans-serif; color: #3c3c3c; }
  i, b { display: block; }
  svg { display: block; }
  .t { display: inline-block; white-space: nowrap; flex: none; }
  .win { height: 967px; overflow: hidden; background: #eee; display: flex; flex-direction: column; }
  .win.a { height: 233px; }
  .win > * { flex: none; box-sizing: border-box; }
  .title { height: 23px; background: #fff; display: flex; align-items: center; padding: 0 19px 0 3px; color: #000; font: 12px/16px "Open Sans", sans-serif; }
  .app { width: 15px; height: 16px; margin-right: 5px; }
  .cap { padding-top: 1px; }
  .ctl { width: 102px; height: 12px; margin: -3px 0 0 auto; }
  .menu { height: 36px; background: #ccc; border-bottom: 1px solid #bbb; display: flex; align-items: center; gap: 10px; padding: 2px 0 0 5px; font-size: 13.3px; }
  .bar { height: 39px; background: #d9d9d9; border-bottom: 1px solid #999; display: flex; align-items: center; gap: 15px; padding-left: 7px; }
  .grip { width: 3px; height: 30px; border: solid #bbb; border-width: 0 1px; flex: none; }
  .bar .grip { margin-right: -3px; }
  .tool { position: relative; flex: none; }
  .ico { width: 20px; height: 20px; flex: none; }
  .dd { position: absolute; left: 20px; top: 20px; border: solid transparent; border-width: 4px 3px 0; border-top-color: #555; }
  .sep { width: 1px; height: 35px; background: #b8b8b8; margin: 0 -4px 0 -3px; flex: none; }
  .sep.first { margin-right: -7px; }
  .sep.second { margin-left: 0; }
  .opts { height: 41px; border-bottom: 1px solid #d9d9d9; display: flex; align-items: center; padding: 2px 0 0 7px; }
  .opts .grip { border-color: #c8c8c8; width: 3px; margin-right: 11px; }
  .opts .tool + .tool { margin-left: 13px; }
  .on { width: 31px; height: 31px; background: #d9d9d9; border-radius: 2px; display: grid; place-items: center; flex: none; }
  .filt { margin-left: 8px; }
  .sp { width: 1px; height: 35px; background: #ccc; flex: none; }
  .s1 { margin: 0 11px 0 5px; }
  .s2 { margin: 0 10px 0 9px; }
  .s3 { margin: 0 5px 0 10px; }
  .s4 { margin: 0 4px 0 5px; }
  .s5 { margin: 0 0 0 8px; }
  .ob { margin-right: 7px; }
  .ob2 { margin-left: 8px; }
  .g11 { margin: 0 11px; }
  .combo { height: 26px; box-sizing: border-box; border: 1px solid #999; background: #fff; display: flex; align-items: center; flex: none; padding: 0 5px 0 6px; }
  .combo .ar { margin-left: auto; }
  .ar { width: 0; height: 0; border: solid transparent; border-width: 5px 3px 0; border-top-color: #555; }
  .layer { width: 113px; margin-left: 12px; padding-left: 4px; }
  .b .layer { width: 141px; }
  .std { width: 111px; }
  .small { width: 55px; padding-left: 4px; }
  .viac { margin-left: 4px; }
  .sw { width: 18px; height: 18px; background: #a00a0a; border: 1px solid #c82a10; margin-right: 6px; }
  .b .sw { background: #0878b0; border-color: #0795d9; }
  .main { flex: 1 0 0 !important; display: flex; min-height: 0; }
  .tools { width: 70px; box-sizing: border-box; border: 1px solid #d9d9d9; border-width: 0 1px; flex: none; overflow: hidden; }
  .hgrip { height: 3px; margin: 7px 7px 5px 8px; border: solid #ccc; border-width: 1px 0; }
  .trow { height: 33px; display: grid; grid-template-columns: 33px 33px; padding-left: 3px; }
  .cell { width: 29px; height: 29px; box-sizing: border-box; margin-top: 2px; padding: 4px 0 0 4px; border-radius: 2px; }
  .cell .dd { left: 19px; }
  .active { background: #d9d9d9; }
  .hs { height: 1px; background: #c8c8c8; margin: 0 1px 1px; }
  .panel { width: 372px; flex: none; display: flex; flex-direction: column; min-height: 0; }
  .a .panel { width: 352px; }
  .tabs { height: 30px; display: flex; flex: none; gap: 4px; padding-left: 2px; color: #868686; }
  .tab { height: 29px; background: #d9d9d9; display: grid; place-items: center; }
  .dm { width: 102px; }
  .in { width: 68px; }
  .sf { width: 96px; height: 28px; background: none; color: #0795d9; border-bottom: 3px solid #0795d9; position: relative; }
  .sf .t { padding-top: 1px; }
  .frame { flex: 1; min-height: 0; overflow: hidden; border: 2px solid #868a94; border-top: 1px solid #999; border-bottom: 0; display: flex; flex-direction: column; }
  .hd { height: 20px; flex: none; line-height: 15px; box-sizing: border-box; }
  .hd .t { line-height: inherit; }
  .h2 { height: 25px; line-height: 25px; }
  .list { background: #fff; border: solid #808490; border-width: 1px 0; box-sizing: border-box; flex: none; color: #fff; }
  .types { height: 300px; padding: 1px; display: flex; }
  .rows { flex: 1; background: #0795d9; overflow: hidden; height: 296px; }
  .row { height: 20px; display: flex; align-items: center; gap: 6px; padding-left: 3px; color: #f4faff; background: #0795d9; }
  .row .t { padding-top: 2px; }
  .mi { width: 16px; height: 16px; }
  .track { width: 16px; background: #f0f0f0; height: 275px; }
  .track i { width: 6px; height: 274px; background: #808080; margin: 1px 0 0 5px; border-radius: 3px; }
  .sets { height: 147px; padding: 2px 1px 0; color: #3c3c3c; }
  .sets div { height: 16px; padding-left: 4px; }
  .sets .alt { background: #f4f4f4; }
  .lay { margin-top: 5px; padding: 1px; flex: 1; border-bottom: 0; }
  .chip { width: 14px; height: 14px; border: 1px solid; }
  .top { background: #702c48; border-color: #902840; }
  .pads { background: #239e90; border-color: #2cb8a0; }
  .dimn { background: #86925f; border-color: #a8a060; }
  .place { background: #6f95b7; border-color: #84a4c4; }
  .keep { background: #042c50; border-color: #0874b0; }
  .split { width: 4px; background: #d9d9d9; flex: none; }
  .work { flex: 1; display: flex; flex-direction: column; min-height: 0; }
  .cmd { height: 34px; flex: none; display: flex; align-items: center; padding: 0 4px 0 7px; gap: 39px; }
  .cmd .t { padding-top: 2px; }
  .input { flex: 1; height: 26px; box-sizing: border-box; background: #fff; border: 1px solid #0795d9; display: flex; align-items: center; padding: 0 5px 0 6px; }
  .input .ar { margin-left: auto; }
  .caret { width: 1px; height: 14px; background: #222; }
  .view { flex: 1; display: flex; min-height: 0; }
  .canvas { position: relative; flex: 1; background: #282828; overflow: hidden; }
  .vtrack { width: 16px; background: #eee; }
  .vtrack i { width: 6px; height: 100%; margin-left: 5px; background: #808080; border-radius: 3px 3px 0 0; }
  .board { width: 1458px; height: 794px; }
  .silk { font-family: "Liberation Sans", sans-serif; fill: #a4a4a4; }
  .net { font-family: "Liberation Sans", sans-serif; font-size: 23.7px; fill: #c8aa28; }
  .padname { font-family: "Liberation Sans", sans-serif; font-size: 9.5px; fill: #a8d4c0; }
  .sidetabs { position: absolute; right: 3px; top: 9px; display: flex; flex-direction: column; gap: 15px; }
  .st { width: 27px; height: 146px; box-sizing: border-box; background: #444; display: flex; flex-direction: column; align-items: center; color: #fff; font: 600 12px/14px "Noto Sans", sans-serif; }
  .st span { writing-mode: vertical-rl; white-space: nowrap; padding-right: 2px; }
  .s-m { padding-top: 7px; gap: 6px; }
  .s-f { padding-top: 19px; gap: 7px; background: #69a827; }
  .s-t { padding-top: 18px; gap: 9px; }
  .tabico { width: 17px; height: 17px; flex: none; }
  .remote { position: absolute; left: 740px; top: 233px; width: 440px; height: 32px; box-sizing: border-box; padding-left: 4px; background: #1f1f1f; color: #fff; display: flex; align-items: center; font: 12px/16px "Open Sans", sans-serif; }
  .remote .t { padding-top: 1px; }
  .rg { width: 2px; height: 12px; background: #777; border: solid #ccc; border-width: 0 1px; margin-right: 6px; }
  .r1 { width: 17px; height: 16px; margin: -3px 3px 0 158px; }
  .r2 { width: 16px; height: 16px; margin-left: 17px; }
  .r3 { width: 16px; height: 16px; margin-left: 12px; }
  .r4 { width: 5px; height: 8px; margin-left: 7px; }
</style>
